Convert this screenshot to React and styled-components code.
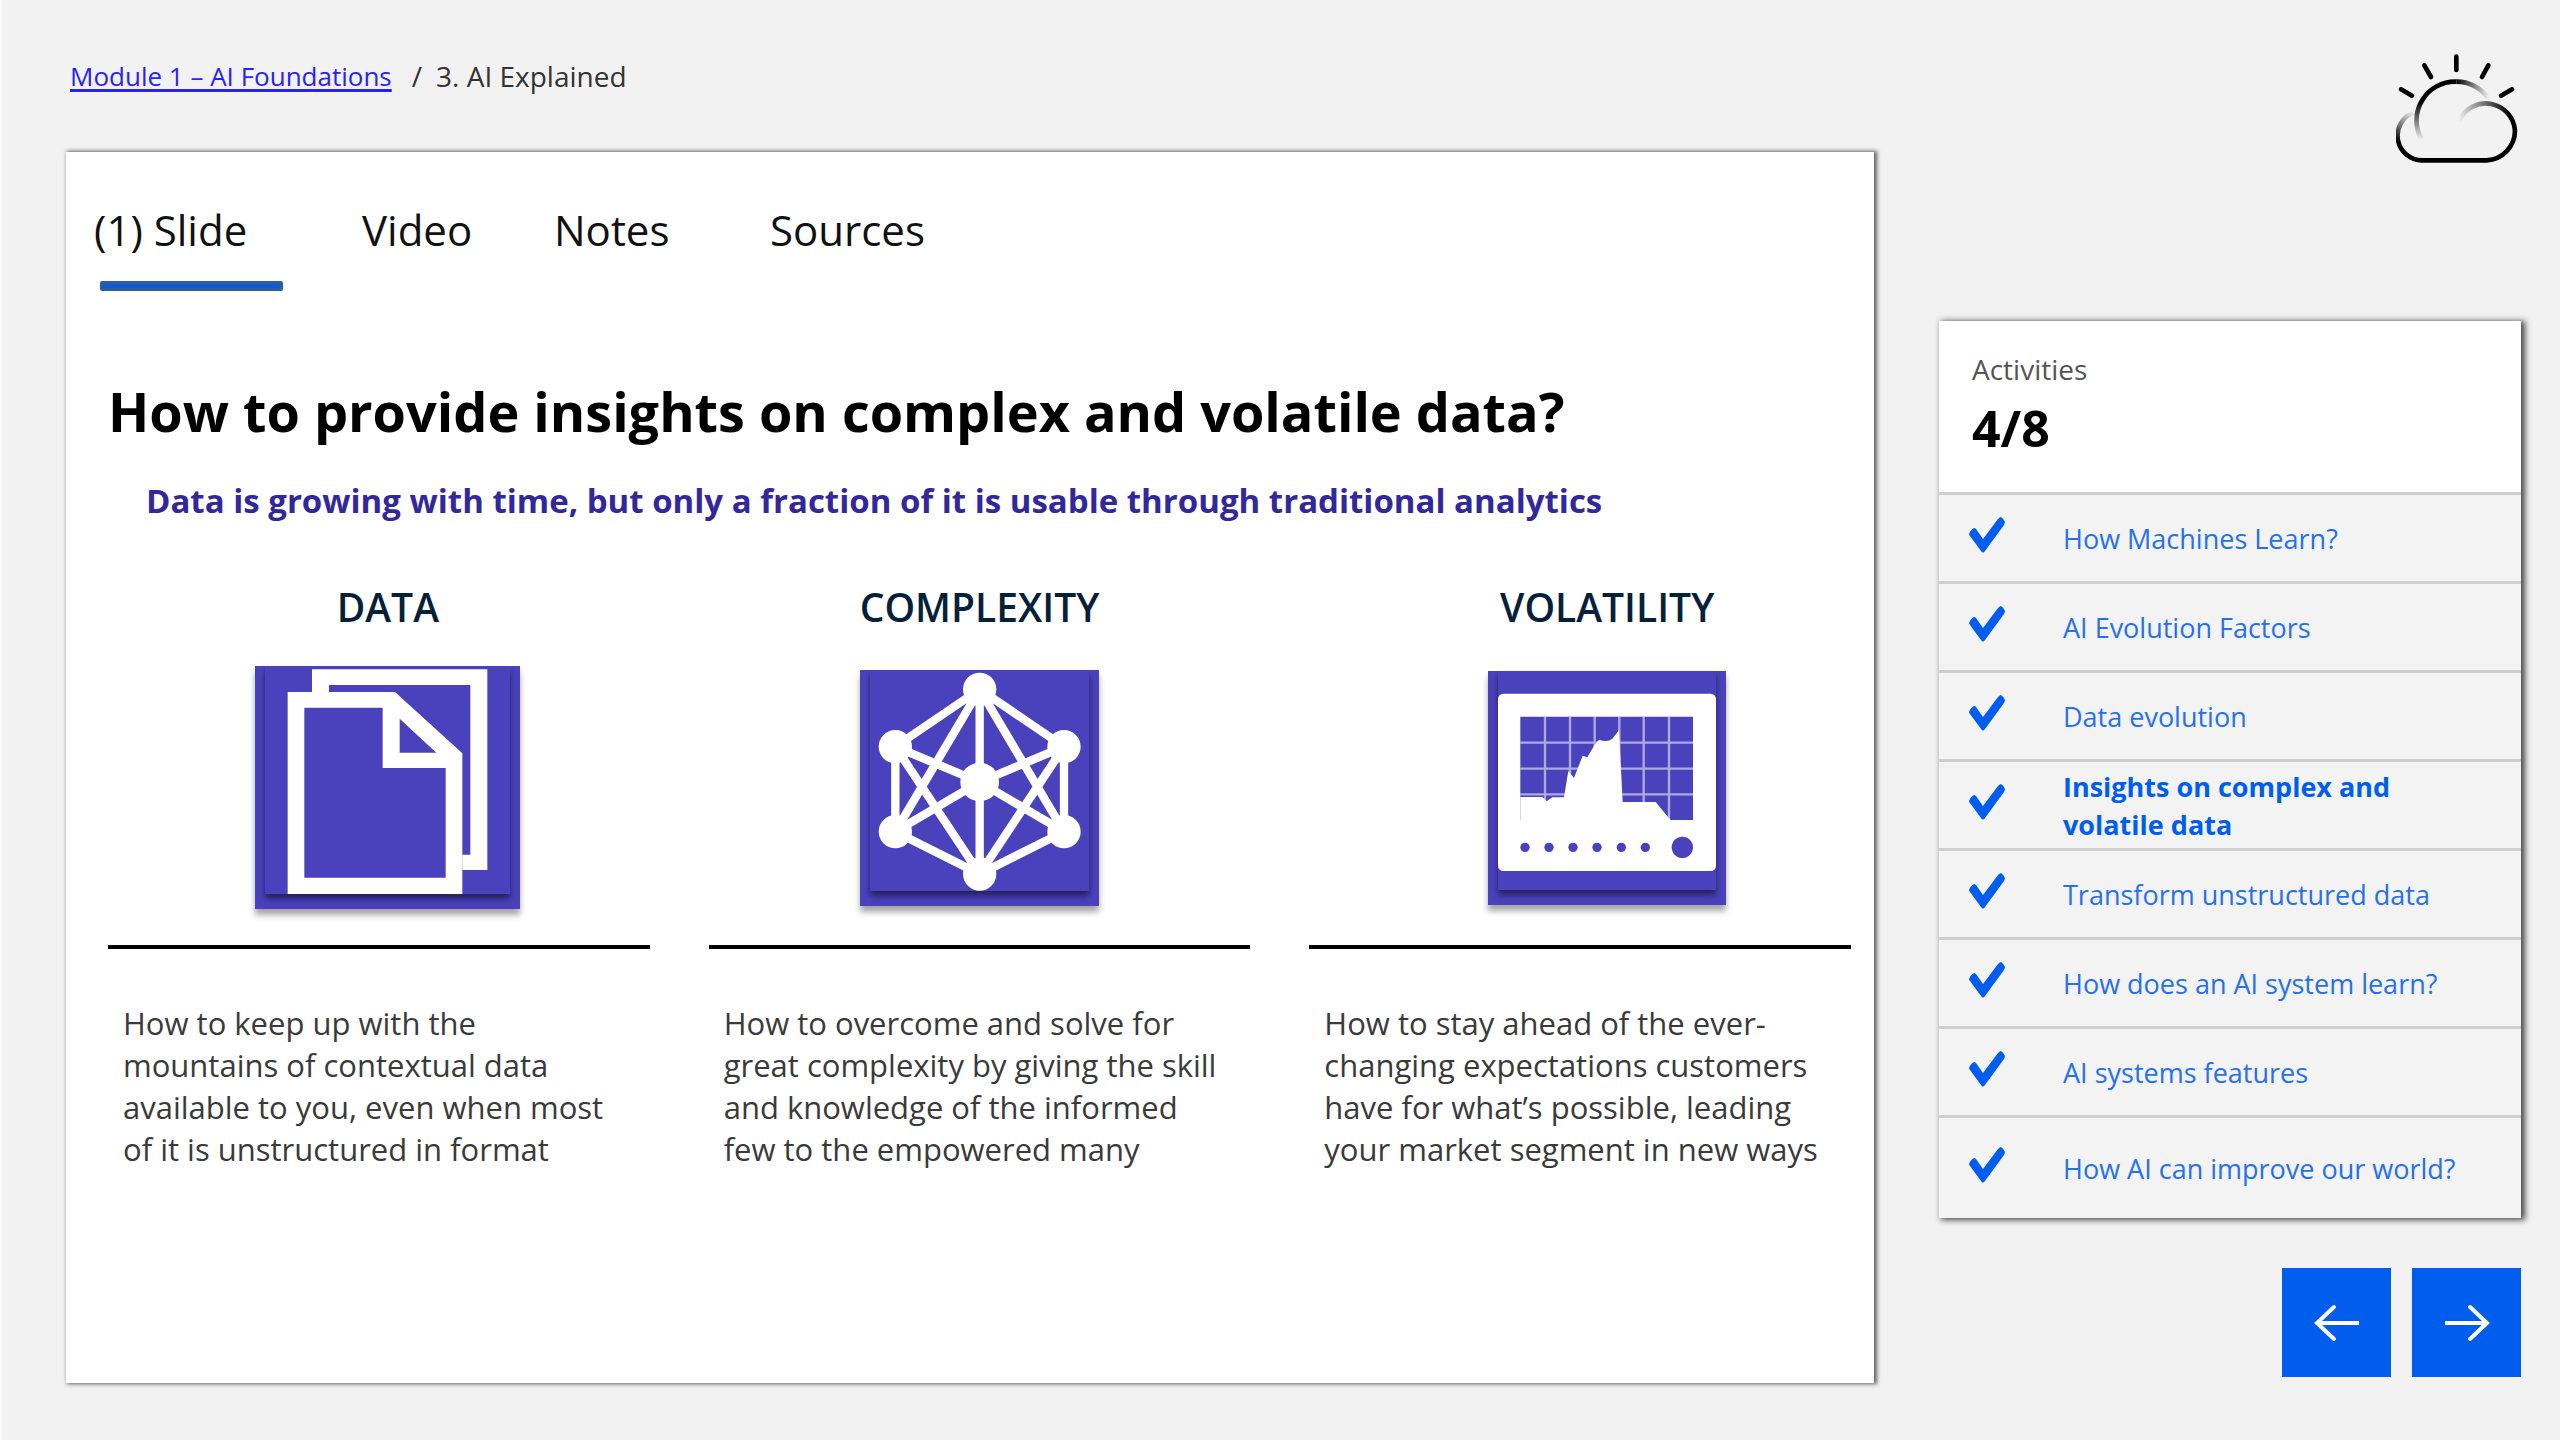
import React from "react";
import styled, { createGlobalStyle } from "styled-components";

const GlobalStyle = createGlobalStyle`
  *, *::before, *::after { box-sizing: border-box; }
  body {
    margin: 0;
    background: #f2f2f2;
    color: #000;
    font-family: "Open Sans", "Noto Sans", sans-serif;
  }
  h1, h2, h3, p, ol { margin: 0; padding: 0; }
  svg { display: block; }
`;

const Page = styled.div`
  display: grid;
  grid-template-columns: minmax(0, 1fr) 582px;
  column-gap: 65px;
  min-height: 100vh;
  padding: 0 39px 57px 64px;
  border-left: 2px solid #fafafa;
`;

const MainColumn = styled.main`
  display: flex;
  flex-direction: column;
  gap: 56px;
  padding-top: 56px;
`;

const Breadcrumb = styled.nav`
  display: flex;
  gap: 20px;
  padding-left: 4px;
  line-height: 40px;
  color: #333;
`;

const CrumbLink = styled.a`
  color: #2a1ff5;
  font-size: 26px;
  text-decoration-thickness: 3px;
  text-underline-offset: 3px;
`;

const CrumbTrail = styled.span`
  display: flex;
  gap: 14px;
  font-size: 28px;
`;

const SlideCard = styled.section`
  flex: 1;
  padding: 48px 23px 60px 28px;
  background: #fff;
  box-shadow: 2px 0 4px 1px rgba(0, 0, 0, 0.6);
`;

const TabList = styled.div`
  display: grid;
  grid-template-columns: 268px 192px 216px auto;
  justify-content: start;
  align-items: start;
`;

const Tab = styled.button`
  padding: 0;
  border: 0;
  background: none;
  color: #111;
  font: inherit;
  font-size: 42px;
  line-height: 60px;
  text-align: left;
  cursor: pointer;

  &::after {
    content: "";
    display: block;
    width: 183px;
    height: 10px;
    margin: 21px 0 0 6px;
    border: 3px solid ${(p) => (p.$active ? "#2b609f" : "transparent")};
    border-radius: 2px;
    background: ${(p) => (p.$active ? "#1159d2" : "transparent")};
  }
`;

const Slide = styled.div`
  padding: 84px 0 0 14px;
`;

const SlideTitle = styled.h1`
  font-size: 54px;
  font-weight: 700;
  line-height: 72px;
`;

const SlideSubtitle = styled.h2`
  margin-top: 30px;
  padding-left: 38px;
  color: #33289b;
  font-size: 33px;
  font-weight: 700;
  line-height: 48px;
`;

const Topics = styled.div`
  display: grid;
  grid-template-columns: repeat(3, minmax(0, 1fr));
  gap: 59px;
  margin-top: 55px;
`;

const TopicHead = styled.div`
  display: flex;
  flex-direction: column;
  align-items: center;
  gap: 32px;
  padding-left: ${(p) => p.$inset}px;
  padding-bottom: 36px;
  border-bottom: 4px solid #000;
`;

const TopicTitle = styled.h3`
  color: #06203a;
  font-size: 39px;
  font-weight: 600;
  line-height: 54px;
`;

const TileSlot = styled.div`
  display: flex;
  align-items: center;
  height: 243px;
`;

const Tile = styled.div`
  padding: 0 10px 15px;
  background: #4942bc;
  box-shadow: 0 6px 6px rgba(0, 0, 0, 0.35);

  svg {
    background: #4942bc;
    box-shadow: 0 5px 6px rgba(0, 0, 0, 0.5);
  }
`;

const TopicText = styled.p`
  padding: 53px 0 0 15px;
  color: #3a3a3a;
  font-size: 31px;
  line-height: 42px;
  white-space: pre-line;
`;

const SideColumn = styled.aside`
  display: flex;
  flex-direction: column;
  align-items: flex-end;
  padding-top: 50px;
`;

const Panel = styled.section`
  align-self: stretch;
  margin-top: 154px;
  background: #f3f3f3;
  box-shadow: 3px 1px 6px 1px rgba(0, 0, 0, 0.7);
`;

const PanelHeader = styled.header`
  display: flex;
  flex-direction: column;
  gap: 8px;
  padding: 29px 33px 32px;
  background: #fff;
`;

const PanelLabel = styled.h2`
  color: #555;
  font-size: 28px;
  font-weight: 400;
  line-height: 38px;
`;

const PanelCount = styled.p`
  font-size: 50px;
  font-weight: 700;
  line-height: 64px;
`;

const ActivityList = styled.ol`
  list-style: none;
`;

const Activity = styled.li`
  display: flex;
  align-items: center;
  gap: 58px;
  min-height: 89px;
  padding: 6px 24px 4px 30px;
  border-top: 3px solid #cfcfcf;

  &:last-child { min-height: 103px; }

  svg { flex: none; margin-bottom: 8px; }
`;

const ActivityLink = styled.a`
  max-width: 410px;
  color: ${(p) => (p.$current ? "#005ded" : "#2670ec")};
  font-size: 27px;
  font-weight: ${(p) => (p.$current ? 700 : 400)};
  line-height: 38px;
  text-decoration: none;
`;

const Pager = styled.nav`
  display: flex;
  gap: 21px;
  margin-top: 50px;
`;

const PagerButton = styled.button`
  display: grid;
  place-items: center;
  width: 109px;
  height: 109px;
  padding: 0;
  border: 0;
  background: #005ded;
  cursor: pointer;
`;

function WeatherIcon() {
  return (
    <svg width="125" height="117" viewBox="165 60 375 351" fill="none" aria-hidden="true">
      <defs>
        <linearGradient id="sunLeft" gradientUnits="userSpaceOnUse" x1="0" y1="215" x2="0" y2="330">
          <stop offset="0" stopColor="#000" />
          <stop offset="1" stopColor="#000" stopOpacity="0" />
        </linearGradient>
        <linearGradient id="sunRight" gradientUnits="userSpaceOnUse" x1="346" y1="0" x2="445" y2="0">
          <stop offset="0" stopColor="#000" />
          <stop offset="1" stopColor="#000" stopOpacity="0" />
        </linearGradient>
        <linearGradient id="cloudLeft" gradientUnits="userSpaceOnUse" x1="185" y1="340" x2="220" y2="246">
          <stop offset="0" stopColor="#000" />
          <stop offset="1" stopColor="#000" stopOpacity="0" />
        </linearGradient>
        <linearGradient id="cloudRight" gradientUnits="userSpaceOnUse" x1="350" y1="255" x2="505" y2="235">
          <stop offset="0" stopColor="#000" stopOpacity="0" />
          <stop offset="1" stopColor="#000" />
        </linearGradient>
      </defs>
      <g strokeWidth="14">
        <path d="M241 327A116 116 0 0 1 346 155" stroke="url(#sunLeft)" />
        <path d="M346 155A116 116 0 0 1 441 203" stroke="url(#sunRight)" />
        <path d="M217 248A74 74 0 0 0 243 391" stroke="url(#cloudLeft)" />
        <path d="M355 270A88 88 0 0 1 522 302" stroke="url(#cloudRight)" />
        <path d="M522 301A88 90 0 0 1 437 391H241" stroke="#000" />
        <path
          d="M346 80V120M250 106L270 141M442 106L423 141M180 178L213 197M513 178L480 197"
          stroke="#000"
          strokeLinecap="round"
        />
      </g>
    </svg>
  );
}

function DocumentsIcon() {
  return (
    <svg width="245" height="228" viewBox="76 78 735 684" fill="#fff" aria-hidden="true">
      <path d="M217 88H743V690H668V644H692V135H268V156H217Z" />
      <path
        fillRule="evenodd"
        d="M144 156H466L668 340V762H144ZM194 203V713H618V384H429V203ZM480 236V338H590Z"
      />
    </svg>
  );
}

function NetworkIcon() {
  return (
    <svg width="219" height="221" viewBox="95 62 657 663" fill="#fff" aria-hidden="true">
      <path
        fill="none"
        stroke="#fff"
        strokeWidth="25"
        d="M424 120L171 292V547L424 674L677 547V292ZV674M171 292L424 398L677 292M171 547L424 398L677 547M424 120L171 547M424 120L677 547M171 292L424 674L677 292"
      />
      <circle cx="424" cy="398" r="58" />
      <circle cx="424" cy="120" r="50" />
      <circle cx="424" cy="674" r="50" />
      <circle cx="171" cy="292" r="50" />
      <circle cx="677" cy="292" r="50" />
      <circle cx="171" cy="547" r="50" />
      <circle cx="677" cy="547" r="50" />
    </svg>
  );
}

function MonitorIcon() {
  return (
    <svg width="218" height="219" viewBox="82 62 654 657" fill="#4942bc" aria-hidden="true">
      <rect x="82" y="130" width="654" height="532" rx="16" fill="#fff" />
      <path d="M149 199H667V509H149Z" />
      <path
        stroke="#fff"
        strokeOpacity="0.55"
        strokeWidth="7"
        d="M223 199V509M298 199V509M372 199V509M446 199V509M519 199V509M595 199V509M149 277H667M149 355H667M149 432H667"
      />
      <path
        fill="#fff"
        d="M149 440H215L228 453L245 441H280L293 362L310 383L336 316L350 321L372 283L385 268Q410 278 425 265L445 240L456 455H555L600 510H149Z"
      />
      {[163, 235, 307, 379, 452, 524].map((x) => (
        <circle key={x} cx={x} cy="591" r="14" />
      ))}
      <circle cx="635" cy="591" r="32" />
    </svg>
  );
}

function CheckIcon() {
  return (
    <svg width="36" height="36" viewBox="0 0 36 36" fill="#005ded" aria-hidden="true">
      <path d="M0 17C1 14 3 12 5 11Q6 11 7 12L14 22L29 2Q31 0 32 0Q35 2 36 5Q36 6 35 8L16 34Q14 37 12 34L1 19Q0 18 0 17Z" />
    </svg>
  );
}

function ArrowIcon({ direction }) {
  const left = direction === "left";
  return (
    <svg width="46" height="38" viewBox="0 0 46 38" fill="none" stroke="#fff" strokeWidth="4" aria-hidden="true">
      <path d={left ? "M4 19H45" : "M1 19H42"} />
      <path strokeLinecap="round" d={left ? "M20 3L3 19L20 35" : "M26 3L43 19L26 35"} />
    </svg>
  );
}

const tabs = ["(1) Slide", "Video", "Notes", "Sources"];

const topics = [
  {
    title: "DATA",
    inset: 18,
    Icon: DocumentsIcon,
    text: "How to keep up with the\nmountains of contextual data\navailable to you, even when most\nof it is unstructured in format",
  },
  {
    title: "COMPLEXITY",
    inset: 0,
    Icon: NetworkIcon,
    text: "How to overcome and solve for\ngreat complexity by giving the skill\nand knowledge of the informed\nfew to the empowered many",
  },
  {
    title: "VOLATILITY",
    inset: 54,
    Icon: MonitorIcon,
    text: "How to stay ahead of the ever-\nchanging expectations customers\nhave for what’s possible, leading\nyour market segment in new ways",
  },
];

const activities = [
  "How Machines Learn?",
  "AI Evolution Factors",
  "Data evolution",
  "Insights on complex and volatile data",
  "Transform unstructured data",
  "How does an AI system learn?",
  "AI systems features",
  "How AI can improve our world?",
];

const currentActivity = 3;

export default function App() {
  return (
    <>
      <GlobalStyle />
      <Page>
        <MainColumn>
          <Breadcrumb aria-label="Breadcrumb">
            <CrumbLink href="#module-1">Module 1 – AI Foundations</CrumbLink>
            <CrumbTrail>
              <span>/</span>
              <span>3. AI Explained</span>
            </CrumbTrail>
          </Breadcrumb>
          <SlideCard>
            <TabList role="tablist">
              {tabs.map((tab, i) => (
                <Tab key={tab} type="button" role="tab" aria-selected={i === 0} $active={i === 0}>
                  {tab}
                </Tab>
              ))}
            </TabList>
            <Slide>
              <SlideTitle>How to provide insights on complex and volatile data?</SlideTitle>
              <SlideSubtitle>
                Data is growing with time, but only a fraction of it is usable through traditional analytics
              </SlideSubtitle>
              <Topics>
                {topics.map(({ title, inset, Icon, text }) => (
                  <article key={title}>
                    <TopicHead $inset={inset}>
                      <TopicTitle>{title}</TopicTitle>
                      <TileSlot>
                        <Tile>
                          <Icon />
                        </Tile>
                      </TileSlot>
                    </TopicHead>
                    <TopicText>{text}</TopicText>
                  </article>
                ))}
              </Topics>
            </Slide>
          </SlideCard>
        </MainColumn>

        <SideColumn>
          <WeatherIcon />
          <Panel>
            <PanelHeader>
              <PanelLabel>Activities</PanelLabel>
              <PanelCount>4/8</PanelCount>
            </PanelHeader>
            <ActivityList>
              {activities.map((name, i) => (
                <Activity key={name}>
                  <CheckIcon />
                  <ActivityLink
                    href={`#activity-${i + 1}`}
                    $current={i === currentActivity}
                    aria-current={i === currentActivity ? "step" : undefined}
                  >
                    {name}
                  </ActivityLink>
                </Activity>
              ))}
            </ActivityList>
          </Panel>
          <Pager aria-label="Slides">
            <PagerButton type="button" aria-label="Previous slide">
              <ArrowIcon direction="left" />
            </PagerButton>
            <PagerButton type="button" aria-label="Next slide">
              <ArrowIcon direction="right" />
            </PagerButton>
          </Pager>
        </SideColumn>
      </Page>
    </>
  );
}
